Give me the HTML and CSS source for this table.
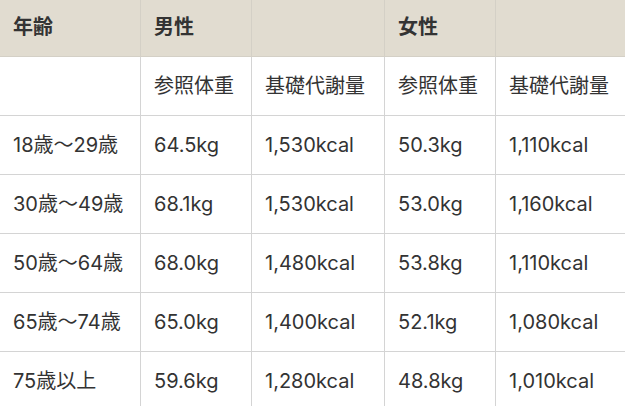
FILE: index.html
```html
<!DOCTYPE html>
<html lang="ja">
<head>
<meta charset="utf-8">
<link rel="stylesheet" href="styles.css">
</head>
<body>
<table class="bmr">
  <colgroup>
    <col class="c1"><col class="c2"><col class="c3"><col class="c4"><col class="c5">
  </colgroup>
  <thead>
    <tr><th>年齢</th><th>男性</th><th></th><th>女性</th><th></th></tr>
  </thead>
  <tbody>
    <tr><td></td><td>参照体重</td><td>基礎代謝量</td><td>参照体重</td><td>基礎代謝量</td></tr>
    <tr><td>18歳～29歳</td><td>64.5kg</td><td>1,530kcal</td><td>50.3kg</td><td>1,110kcal</td></tr>
    <tr><td>30歳～49歳</td><td>68.1kg</td><td>1,530kcal</td><td>53.0kg</td><td>1,160kcal</td></tr>
    <tr><td>50歳～64歳</td><td>68.0kg</td><td>1,480kcal</td><td>53.8kg</td><td>1,110kcal</td></tr>
    <tr><td>65歳～74歳</td><td>65.0kg</td><td>1,400kcal</td><td>52.1kg</td><td>1,080kcal</td></tr>
    <tr><td>75歳以上</td><td>59.6kg</td><td>1,280kcal</td><td>48.8kg</td><td>1,010kcal</td></tr>
  </tbody>
</table>
</body>
</html>
```
FILE: styles.css
```css
html, body {
  margin: 0;
  padding: 0;
  background: #ffffff;
}
body {
  font-family: Inter, "Noto Sans CJK JP", sans-serif;
  color: #333333;
  overflow: hidden;
}
.bmr {
  border-collapse: collapse;
  table-layout: fixed;
  width: 626px;
  margin: -1px 0 0 -1px;
  font-size: 20px;
}
.c1 { width: 141px; }
.c2 { width: 111px; }
.c3 { width: 133px; }
.c4 { width: 111px; }
.c5 { width: 130px; }
.bmr th, .bmr td {
  border: 1px solid #d4d4d4;
  text-align: left;
  line-height: 28px;
  padding: 15px 13px;
  white-space: nowrap;
  vertical-align: middle;
}
.bmr th {
  background: #e1dcd0;
  font-weight: 700;
  padding: 13px 13px 15px;
  border-color: #d4d0c6;
}
```
